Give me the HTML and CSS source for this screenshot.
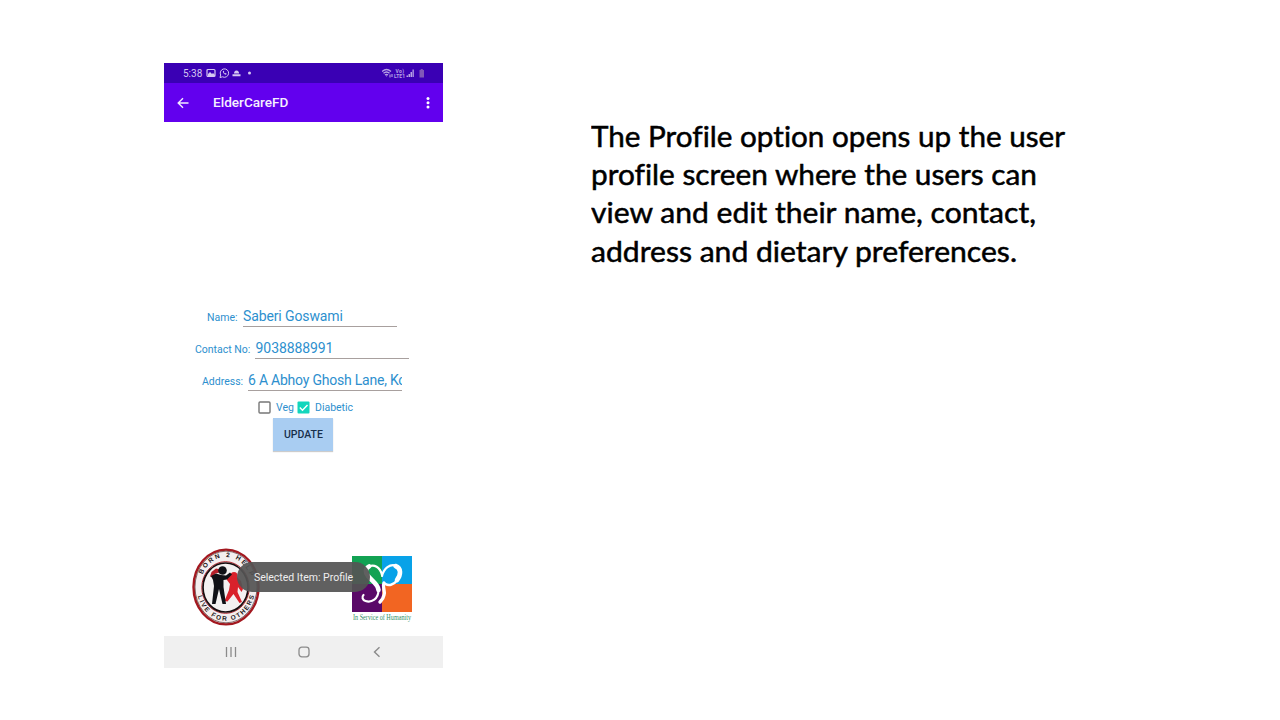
FILE: index.html
```html
<!DOCTYPE html>
<html lang="en">
<head>
<meta charset="utf-8">
<title>ElderCareFD</title>
<link rel="stylesheet" href="styles.css">
</head>
<body>
<main class="slide">
  <section class="phone">
    <div class="status">
      <span class="clock">5:38</span>
      <svg class="status-left" width="48" height="12" viewBox="0 0 48 12">
        <rect x="1" y="2.500" width="8" height="7" rx="1" fill="none" stroke="#d6c8f2" stroke-width="1.200"/>
        <path d="M2 9V7l2-2 2 2 1-1 2 2v1z" fill="#d6c8f2"/>
        <path d="M14 10.500l.7-2.500A4.200 4.200 0 1 1 16.500 9.800z" fill="none" stroke="#d6c8f2" stroke-width="1"/>
        <path d="M17 4c-.6 1.500 1.400 3.900 3.200 3.600l.5-.9-1.200-.7-.6.5-1.100-1.200.4-.6-.4-1z" fill="#d6c8f2"/>
        <path d="M28 6.500c0-1.500.7-3 2.500-3s2.600 1.500 2.600 3zM26.500 7.300h8v2h-8z" fill="#d6c8f2"/>
        <circle cx="43.500" cy="6" r="1.500" fill="#d6c8f2"/>
      </svg>
      <svg class="status-right" width="46" height="12" viewBox="0 0 46 12">
        <g fill="none" stroke="#b8a2e6" stroke-width="1.300">
          <path d="M0 4.500Q4.500.5 9 4.500M1.500 6.300Q4.500 3.600 7.500 6.300M3 8Q4.500 6.700 6 8"/>
          <path d="M8 7.500v3M10 7v3" stroke-width="1.100"/>
        </g>
        <path d="M3.600 8.600h1.800l-.9 1.200z" fill="#b8a2e6"/>
        <text x="13.500" y="5.600" class="net" textLength="8.500">Vo)</text>
        <text x="12" y="10.700" class="net" textLength="11">LTE1</text>
        <path d="M24.500 10V8.500H26V10zM26.500 10V7H28v3zM28.500 10V5H30v5zM30.500 10V2.500h1.300V10z" fill="#b8a2e6"/>
        <path d="M37.500 3h1.200V2h2.100v1H42v7.500h-4.500z" fill="#8058b8"/>
      </svg>
    </div>
    <header class="appbar">
      <svg class="back" width="12" height="12" viewBox="0 0 12 12"><path d="M11.500 6H1.500M6 1.200L1.200 6 6 10.800" fill="none" stroke="#f2eaff" stroke-width="1.400"/></svg>
      <h1 class="title">ElderCareFD</h1>
      <svg class="more" width="4" height="14" viewBox="0 0 4 14" fill="#fff"><circle cx="2" cy="2.500" r="1.500"/><circle cx="2" cy="6.700" r="1.500"/><circle cx="2" cy="10.900" r="1.500"/></svg>
    </header>
    <div class="form">
      <div class="row row-name"><span class="label">Name:</span><span class="field">Saberi Goswami</span></div>
      <div class="row row-contact"><span class="label">Contact No:</span><span class="field">9038888991</span></div>
      <div class="row row-address"><span class="label">Address:</span><span class="field">6 A Abhoy Ghosh Lane, Ko</span></div>
      <div class="checks">
        <svg width="13" height="13" viewBox="0 0 13 13"><rect x="1" y="1" width="11" height="11" rx="1" fill="#fff" stroke="#777" stroke-width="1.400"/></svg>
        <span class="check-label veg">Veg</span>
        <svg width="13" height="13" viewBox="0 0 13 13"><rect x=".5" y=".5" width="12" height="12" rx="1" fill="#12d6bd"/><path d="M2.800 6.500l2.700 2.800 5-5.300" fill="none" stroke="#fff" stroke-width="1.400"/></svg>
        <span class="check-label">Diabetic</span>
      </div>
      <div class="update">UPDATE</div>
    </div>
    <div class="logos">
      <svg class="born" width="68" height="78" viewBox="0 0 68 78">
        <defs>
          <path id="arc-top" d="M8.200 39A25.800 30 0 0 1 59.800 39"/>
          <path id="arc-bottom" d="M4.800 39A29.200 33.800 0 0 0 63.200 39"/>
        </defs>
        <ellipse cx="34" cy="39" rx="32.500" ry="37.400" fill="#f4eeee" stroke="#a3181f" stroke-width="2.400"/>
        <ellipse cx="34" cy="39" rx="31" ry="35.800" fill="none" stroke="#3a1618" stroke-width=".6"/>
        <ellipse cx="33.500" cy="39.500" rx="23.700" ry="25.800" fill="#f3f1f1" stroke="#b01d25" stroke-width="1"/>
        <ellipse cx="33.500" cy="39.500" rx="22.500" ry="24.500" fill="none" stroke="#160c0e" stroke-width="1.700"/>
        <text class="ring"><textPath href="#arc-top" startOffset="51%" text-anchor="middle" textLength="64">BORN 2 HELP</textPath></text>
        <text class="ring"><textPath href="#arc-bottom" startOffset="50%" text-anchor="middle" textLength="81">LIVE FOR OTHERS</textPath></text>
        <path d="M35 29l4-3 5 2 5 5 2 8-1.500 3-3.500-5-.5 5 4.500 10-2.500 1-6-9-6 7.500-3-.5 4.500-11 1-6-3-4z" fill="#d9212b"/>
        <circle cx="42" cy="27.500" r="3.500" fill="#d9212b"/>
        <path d="M18 28.500l1.500-4.500 4.500-3.500 4.500 1-1 3-4 1-3 4z" fill="#b5202a"/>
        <path d="M19 28l5-2.500 5 1.500 5 .5 4-3 2 2-5 5-3.500.5v7l2.500 17h-3.500l-3.500-15-3.500 15h-3.500l2-18-1-6z" fill="#101116"/>
        <circle cx="30.500" cy="22.500" r="4.300" fill="#101116"/>
      </svg>
      <div class="service">
        <svg class="sp" width="60" height="56" viewBox="0 0 60 56">
          <path fill="#12a253" d="M0 0h30v28H0z"/><path fill="#08a2e8" d="M30 0h30v28H30z"/>
          <path fill="#5a0968" d="M0 28h30v28H0z"/><path fill="#f26522" d="M30 28h30v28H30z"/>
          <g fill="none" stroke="#fff" stroke-linecap="round">
            <path d="M30 19C28 11 22 8 17 10.500" stroke-width="2.200"/>
            <path d="M17 10.500c-4 2-4 6-1 9.500 4 5 10 8 10.500 14" stroke-width="4.600"/>
            <path d="M26.500 34c0 9-7 13-13 11-3-1-4-4-2-6" stroke-width="2.200"/>
            <path d="M30 20C32 12 38 8 43.500 9.500" stroke-width="2.200"/>
            <path d="M43.500 10c6 2 5.500 9 1.500 14" stroke-width="4.600"/>
            <path d="M44.500 25c-3 4-8 5-11 3" stroke-width="2.400"/>
            <path d="M32 27c-2 4 1.500 8 0 12-.5 3-2 5-4 7" stroke-width="3.400"/>
          </g>
        </svg>
        <svg class="tag" width="60" height="11" viewBox="0 0 60 11"><text x="1" y="8" textLength="58" lengthAdjust="spacingAndGlyphs">In Service of Humanity</text></svg>
      </div>
      <div class="toast">Selected Item: Profile</div>
    </div>
    <nav class="nav">
      <svg width="12" height="12" viewBox="0 0 12 12"><path d="M1.500 1v10M6 1v10M10.500 1v10" stroke="#8b8b8b" stroke-width="1.300"/></svg>
      <svg width="12" height="12" viewBox="0 0 12 12"><rect x="1" y="1.200" width="10" height="9.600" rx="2.800" fill="none" stroke="#8b8b8b" stroke-width="1.300"/></svg>
      <svg width="12" height="12" viewBox="0 0 12 12"><path d="M8.500 1.300L3.500 6l5 4.700" fill="none" stroke="#8b8b8b" stroke-width="1.400"/></svg>
    </nav>
  </section>
  <svg class="caption" width="490" height="160" viewBox="0 0 490 160">
    <text x="0" y="31.500" textLength="474" lengthAdjust="spacingAndGlyphs">The Profile option opens up the user</text>
    <text x="0" y="69.500" textLength="446" lengthAdjust="spacingAndGlyphs">profile screen where the users can</text>
    <text x="0" y="108" textLength="445" lengthAdjust="spacingAndGlyphs">view and edit their name, contact,</text>
    <text x="0" y="146.500" textLength="426" lengthAdjust="spacingAndGlyphs">address and dietary preferences.</text>
  </svg>
</main>
</body>
</html>
```
FILE: styles.css
```css
* { box-sizing: border-box; }
body { margin: 0; background: #fff; font-family: Roboto, "Liberation Sans", sans-serif; }
svg { display: block; flex: none; }
.slide { display: flex; align-items: flex-start; width: 1280px; height: 720px; padding: 63px 0 0 164px; overflow: hidden; }
.phone { display: flex; flex-direction: column; flex: none; width: 279px; height: 605px; }
.status { display: flex; align-items: center; height: 20px; padding: 0 15px 0 19px; background: #3a00b4; }
.clock { width: 22px; font-size: 10px; line-height: 21px; color: #d6c8f2; white-space: nowrap; }
.status-left { margin-left: 1px; }
.status-right { margin-left: auto; }
.net { font-size: 5px; font-weight: 700; fill: #b8a2e6; }
.appbar { display: flex; align-items: center; height: 39px; padding: 0 13px; background: #6200ee; }
.title { margin: 0 0 0 24px; font-size: 13.600px; font-weight: 500; line-height: 39px; color: #f5efff; }
.more { margin-left: auto; }
.form { display: flex; flex-direction: column; flex: 1; padding-top: 183px; color: #2d8fce; }
.row { display: flex; height: 32px; white-space: nowrap; }
.row-name { padding-left: 43px; }
.row-contact { padding-left: 31px; }
.row-address { padding-left: 38px; }
.label { flex: none; margin-right: 5px; font-size: 10.500px; line-height: 25px; }
.row-name .label { width: 31px; }
.row-contact .label { width: 55px; }
.row-address .label { width: 41px; }
.field { width: 154px; height: 22px; font-size: 14px; line-height: 23px; letter-spacing: -.12px; border-bottom: 1px solid #a8a09e; overflow: hidden; }
.row-contact .field { padding-left: .6px; letter-spacing: -.1px; }
.row-address .field { letter-spacing: -.22px; }
.checks { display: flex; align-items: center; height: 13px; padding-left: 94px; }
.check-label { margin-left: 5px; font-size: 10.500px; line-height: 13px; }
.veg { width: 21px; }
.update { width: 60px; height: 33px; margin: 4px 0 0 109.400px; background: #a9cdf2; box-shadow: 0 1px 1px #ccc; font-size: 10.500px; font-weight: 500; line-height: 34px; text-align: center; color: #172f4c; }
.logos { position: relative; display: flex; justify-content: space-between; height: 88px; padding: 0 31px 0 28px; }
.service { padding-top: 8px; }
.tag text { font: 7.500px "Liberation Serif", serif; fill: #309064; }
.ring { font: 700 6.500px "Liberation Sans", sans-serif; fill: #26191b; }
.toast { position: absolute; left: 73px; top: 14px; width: 133px; height: 30px; border-radius: 15px; background: rgba(84, 84, 84, .93); font-size: 10.500px; line-height: 31px; text-align: center; color: #eee; white-space: nowrap; }
.nav { display: flex; align-items: center; height: 32px; padding-left: 61px; gap: 61px; background: #f0f0f0; }
.caption { margin: 52px 0 0 148px; }
.caption text { font: 29px Lato, "Open Sans", sans-serif; font-variant-ligatures: none; fill: #000; stroke: #000; stroke-width: .5px; }
```
